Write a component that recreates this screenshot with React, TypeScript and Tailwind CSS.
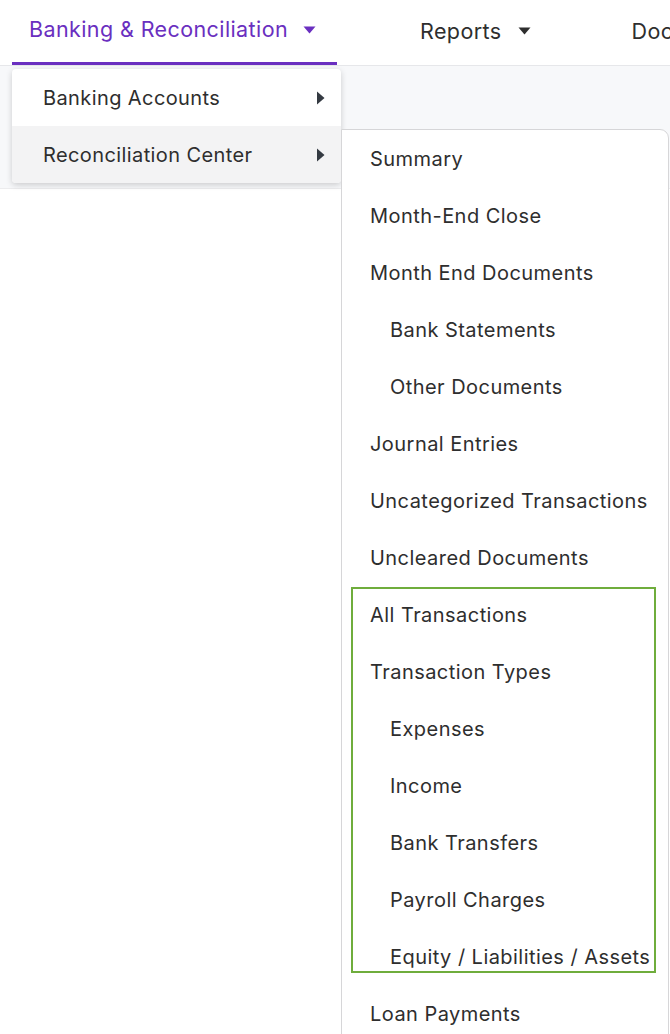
import React from "react";

const font = { fontFamily: 'Inter, "Noto Sans", sans-serif' };

function Caret({ color, ml }: { color: string; ml: string }) {
  return (
    <svg width="13" height="8" viewBox="0 0 13 8" className={"shrink-0 " + ml}>
      <path d="M0.5 0.5 L12.5 0.5 L6.5 7.5 Z" fill={color} />
    </svg>
  );
}

function RightArrow() {
  return (
    <svg width="9" height="14" viewBox="0 0 9 14" className="shrink-0">
      <path d="M1 0.5 L8.5 7 L1 13.5 Z" fill="#343a42" />
    </svg>
  );
}

const subItems: { label: string; indent?: boolean }[] = [
  { label: "Summary" },
  { label: "Month-End Close" },
  { label: "Month End Documents" },
  { label: "Bank Statements", indent: true },
  { label: "Other Documents", indent: true },
  { label: "Journal Entries" },
  { label: "Uncategorized Transactions" },
  { label: "Uncleared Documents" },
];

const boxed: { label: string; indent?: boolean }[] = [
  { label: "All Transactions" },
  { label: "Transaction Types" },
  { label: "Expenses", indent: true },
  { label: "Income", indent: true },
  { label: "Bank Transfers", indent: true },
  { label: "Payroll Charges", indent: true },
  { label: "Equity / Liabilities / Assets", indent: true },
];

function SubRow({ label, indent }: { label: string; indent?: boolean }) {
  return (
    <div
      className={
        "h-[57px] flex items-center text-[20px] tracking-[0.45px] text-[#2e2e2e] whitespace-nowrap " +
        (indent ? "pl-[48px]" : "pl-[28px]")
      }
    >
      {label}
    </div>
  );
}

export default function App() {
  return (
    <div className="relative w-[670px] h-[1034px] overflow-hidden bg-[#f7f8fa]" style={font}>
      {/* Top nav */}
      <div className="h-[66px] bg-white border-b border-[#e6e7ea] flex items-stretch whitespace-nowrap">
        <div className="ml-[12px] w-[325px] shrink-0 pl-[17px] flex items-center border-b-[3px] border-[#6a2fc0] pb-[3px]">
          <span className="text-[21.5px] tracking-[0.4px] text-[#6a2fc0]">Banking &amp; Reconciliation</span>
          <Caret color="#6a2fc0" ml="ml-[15px]" />
        </div>
        <div className="ml-[83px] shrink-0 flex items-center pb-[3px]">
          <span className="text-[21.5px] tracking-[0.4px] text-[#2e2e2e]">Reports</span>
          <Caret color="#2e2e2e" ml="ml-[16px]" />
        </div>
        <div className="ml-[101px] shrink-0 flex items-center pb-[3px]">
          <span className="text-[21.5px] tracking-[0.4px] text-[#2e2e2e]">Documents</span>
        </div>
      </div>

      {/* page content */}
      <div className="mt-[122px] h-[900px] bg-white border-t border-[#ececee]" />

      {/* First dropdown */}
      <div className="absolute left-[12px] top-[69px] w-[329px] bg-white rounded-[4px] shadow-[0_2px_6px_rgba(0,0,0,0.18)] overflow-hidden">
        <div className="h-[57px] flex items-center justify-between pl-[31px] pr-[16px] text-[20px] tracking-[0.4px] text-[#2e2e2e]">
          <span>Banking Accounts</span>
          <RightArrow />
        </div>
        <div className="h-[57px] flex items-center justify-between pl-[31px] pr-[16px] text-[20px] tracking-[0.4px] text-[#2e2e2e] bg-[#f3f3f4]">
          <span>Reconciliation Center</span>
          <RightArrow />
        </div>
      </div>

      {/* Submenu */}
      <div className="absolute left-[341px] top-[129px] w-[328px] h-[920px] bg-white border border-[#d6d6d8] rounded-tr-[9px]">
        {subItems.map((it) => (
          <SubRow key={it.label} {...it} />
        ))}
        <div className="relative">
          {boxed.map((it) => (
            <SubRow key={it.label} {...it} />
          ))}
          <div className="absolute left-[9px] right-[12px] top-[1px] bottom-[12px] border-2 border-[#6fad3c] pointer-events-none" />
        </div>
        <SubRow label="Loan Payments" />
      </div>
    </div>
  );
}
